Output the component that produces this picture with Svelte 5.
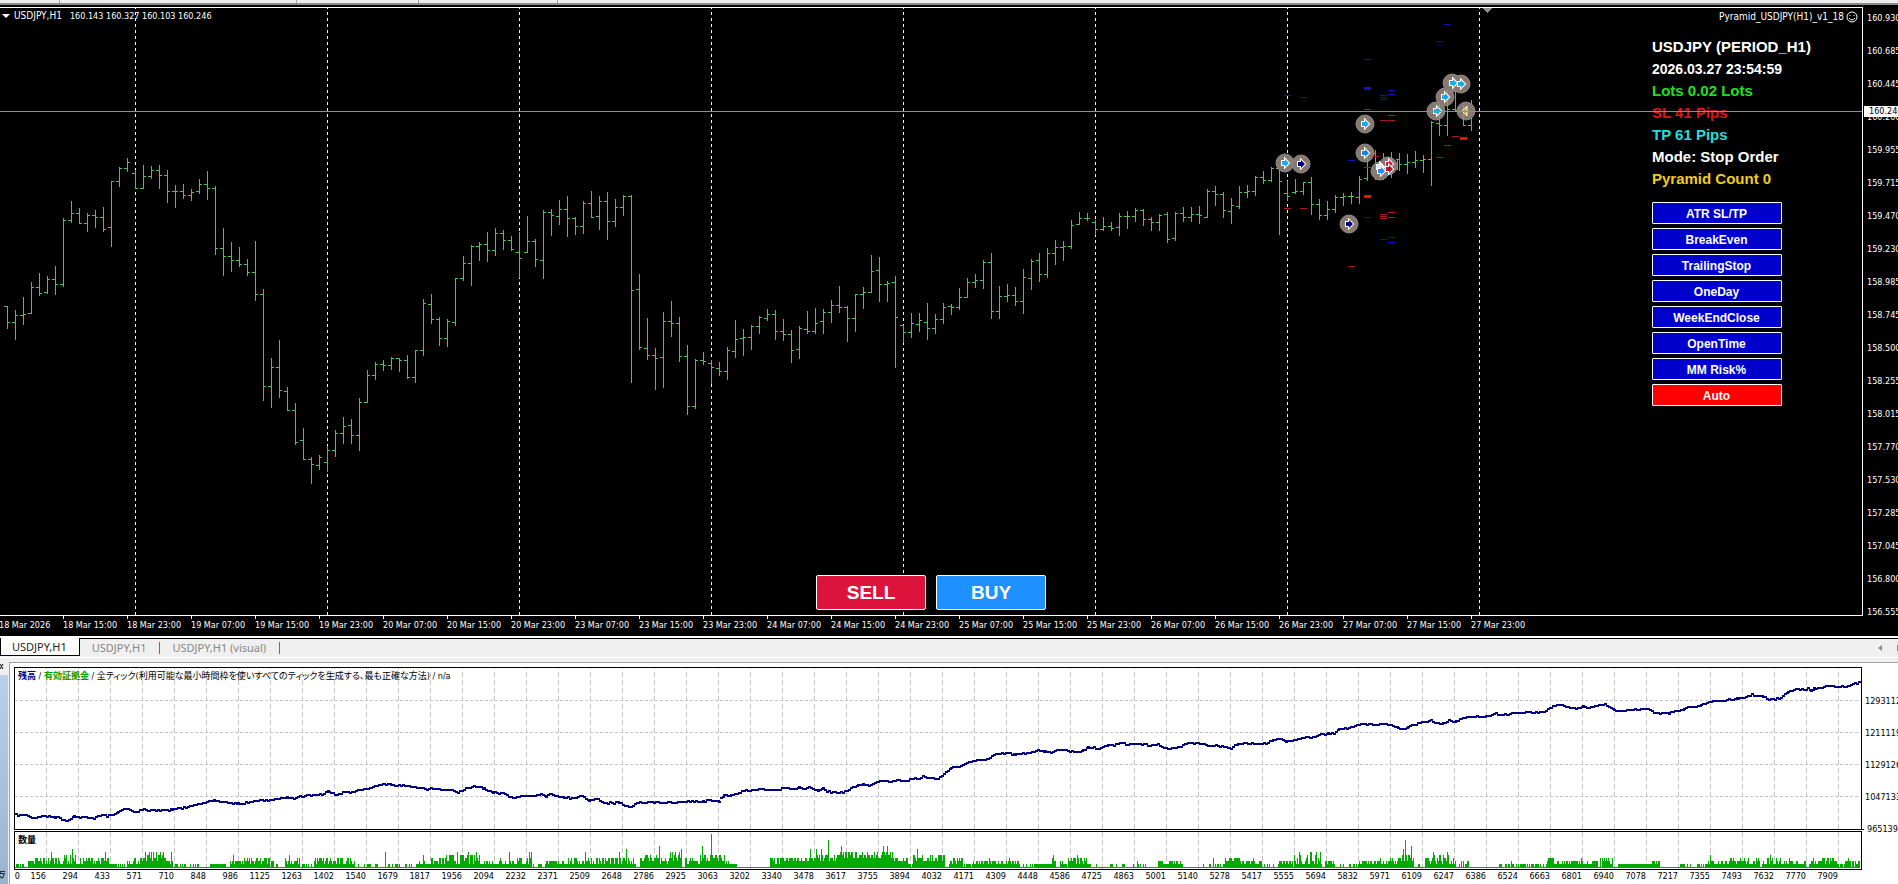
<script>
    // one bar every 8px: open, high, low, close
    const bars = `306 306 329 322,322 310 340 315,315 297 325 314,313 282 314 287,287 273 296 293,292 276 294 279,279 266 295 284,284 218 287 220,
220 201 223 213,213 208 224 223,223 213 232 215,215 210 228 217,217 207 232 229,227 181 247 181,181 167 187 168,168 158 172 162,
173 170 189 188,188 165 189 176,176 166 179 170,170 165 189 175,175 170 203 191,191 185 208 191,191 184 199 195,195 189 201 192,
191 179 194 184,184 171 200 188,188 186 255 248,248 228 276 256,256 242 272 260,260 247 267 264,264 259 276 272,272 241 301 294,
294 289 401 386,386 358 408 367,367 340 398 390,391 387 411 410,410 403 445 442,440 428 460 459,459 457 484 464,465 455 470 457,
462 446 472 450,450 430 457 433,433 417 444 426,425 419 444 435,435 398 451 402,402 370 403 375,375 362 380 364,364 360 371 365,
365 357 370 358,358 358 372 360,360 355 379 377,377 350 383 350,350 299 356 303,304 294 324 319,319 317 346 338,338 319 347 321,
322 278 326 278,278 256 281 263,263 245 286 246,246 242 261 244,244 232 262 250,250 228 256 233,233 230 250 240,240 236 251 249,
252 232 278 258,252 216 253 241,241 239 267 259,260 210 279 212,212 209 236 215,216 200 225 209,209 196 237 218,218 217 235 226,
226 201 234 203,203 191 218 217,216 196 230 201,201 192 240 221,221 199 227 207,207 195 216 196,196 195 383 290,289 274 350 347,
348 318 360 355,355 348 390 358,357 312 388 321,321 301 337 323,323 317 362 356,356 345 415 406,406 359 409 360,360 352 365 361,
363 360 384 367,368 362 376 371,371 347 380 350,351 320 358 339,338 329 356 337,337 325 350 326,326 316 334 317,318 309 321 314,
314 310 340 331,331 319 341 334,334 330 363 350,349 326 359 328,329 311 334 331,331 308 334 323,321 309 334 312,312 300 323 305,
305 286 313 307,307 306 342 318,318 294 332 294,294 287 309 292,292 255 293 271,270 257 302 284,284 281 302 283,282 276 368 317,
325 325 343 332,332 313 338 323,324 313 332 320,322 303 340 328,328 314 334 319,319 303 324 307,306 304 315 307,307 288 310 297,
297 278 298 282,282 274 288 280,280 260 289 262,262 253 319 311,311 286 319 296,296 284 302 295,295 287 306 301,301 269 314 277,
278 259 290 261,260 253 282 274,274 248 278 253,253 240 265 247,247 241 261 246,246 220 249 225,224 212 225 218,218 213 221 218,
222 220 235 229,229 217 231 226,226 222 231 228,227 213 236 216,216 211 229 216,216 208 222 210,210 209 226 219,219 217 231 222,
222 214 231 215,214 212 243 239,238 212 241 213,213 207 222 217,217 207 222 214,214 206 224 215,217 189 218 191,191 186 206 194,
194 192 218 210,211 198 224 205,206 186 209 192,192 185 198 191,191 176 196 177,177 171 184 180,180 167 182 168,168 165 235 181,
193 181 201 196,192 179 194 191,191 182 195 182,182 177 215 204,204 199 220 215,215 201 220 209,209 195 213 197,197 193 206 196,
196 192 204 196,197 176 204 179,178 148 181 153,153 150 180 170,170 153 180 162,162 152 178 165,159 153 171 164,164 154 174 162,
162 151 168 160,160 155 173 159,159 121 186 122,123 104 136 125,125 88 136 109,109 91 111 110,110 105 126 125,125 100 131 110`
        .split(',')
        .map(b => b.trim().split(' ').map(Number));

    const barPath = bars.map(([o, h, l, c], i) => {
        const x = 7 + i * 8;
        return `M${x} ${h}h1V${l}h-1zM${x - 3} ${o}h3v1h-3zM${x + 1} ${c}h2v1h-2z`;
    }).join('');

    const daySeparators = [135, 327, 519, 711, 903, 1095, 1287, 1479];

    const prices = ['160.930', '160.685', '160.445', '160.200', '159.955', '159.715', '159.470', '159.230', '158.985', '158.745', '158.500', '158.255', '158.015', '157.770', '157.530', '157.285', '157.045', '156.800', '156.555'];

    const times = ['18 Mar 2026', '18 Mar 15:00', '18 Mar 23:00'];
    for (const day of [19, 20, 23, 24, 25, 26, 27]) {
        for (const hour of ['07:00', '15:00', '23:00']) times.push(`${day} Mar ${hour}`);
    }

    // x of the bar, y, thickness
    const takeProfits = [[1287, 95, 1], [1303, 97, 1], [1367, 59, 1], [1367, 87, 3], [1383, 95, 1], [1383, 97, 1], [1383, 99, 1], [1391, 90, 1], [1391, 94, 1], [1351, 160, 1], [1367, 217, 1], [1383, 239, 1], [1391, 237, 1], [1391, 242, 1], [1447, 24, 1], [1439, 41, 1]];
    const stopLosses = [[1287, 208, 1], [1303, 208, 1], [1367, 109, 1], [1383, 120, 1], [1391, 115, 1], [1391, 120, 1], [1375, 156, 1], [1367, 167, 1], [1367, 195, 3], [1383, 214, 1], [1383, 216, 1], [1383, 218, 1], [1391, 212, 1], [1391, 217, 1], [1351, 266, 1], [1439, 157, 1], [1447, 145, 1], [1455, 136, 1], [1463, 137, 3]];

    const rings = [[1285, 163], [1301, 164], [1365, 124], [1365, 153], [1349, 224], [1380, 171], [1388, 166], [1436, 111], [1445, 97], [1452, 83], [1461, 84], [1466, 111]];
    const arrows = [
        [1285, 163, '#1eaae6'], [1301, 164, '#00007c'], [1365, 124, '#1eaae6'], [1365, 153, '#1e82e6'], [1349, 224, '#00007c'],
        [1380, 167, '#dfe8ee'], [1381, 171, '#1e90ff'], [1389, 164, '#dc143c'], [1389, 169, '#b4142d'],
        [1437, 111, '#1eaae6'], [1445, 97, '#1eaae6'], [1453, 83, '#1eaae6'], [1461, 84, '#1eaae6']
    ];

    const info = [
        ['2026.03.27 23:54:59', 'white'],
        ['Lots 0.02 Lots', 'lime'],
        ['SL 41 Pips', 'red'],
        ['TP 61 Pips', 'aqua'],
        ['Mode: Stop Order', 'white'],
        ['Pyramid Count 0', 'gold']
    ];
    const switches = ['ATR SL/TP', 'BreakEven', 'TrailingStop', 'OneDay', 'WeekEndClose', 'OpenTime', 'MM Risk%'];

    const tabs = ['USDJPY,H1', 'USDJPY,H1', 'USDJPY,H1 (visual)'];
    let activeTab = 0;
    let auto = true;

    const balance = `15,815 25,815 31,818 42,816 55,817 66,821 73,816 79,818 85,817 93,818 102,815 106,816 112,815 117,812 125,809 135,812 143,809 148,811 151,809 155,811 162,810 171,810 175,809 187,807 200,803 213,801 230,803 237,804 245,803 255,801 272,800 287,797 293,798 302,796 313,795 323,794 328,791 334,794 338,794 345,792 353,792 363,789 370,788 383,784 390,785 398,785 408,786 418,789 430,789 447,790 457,792 465,789 471,787 480,787
483,789 492,793 502,793 512,798 522,796 528,796 540,794 545,796 550,794 563,798 575,798 581,795 588,801 597,799 603,803 618,803 628,807 637,803 653,802 673,803 687,801 702,802 707,800 718,801 723,795 730,796 739,792 752,790 777,790 783,787 793,790 798,787 802,789 808,788 817,791 822,789 828,792 840,793 848,790 857,785 862,784 868,786 877,781 884,780 888,782 898,780 905,781 910,779 918,779 922,776 928,778 937,779 943,774 950,768 960,766
968,762 987,759 993,755 1007,753 1014,755 1027,753 1033,751 1044,751 1052,753 1059,749 1067,751 1075,752 1082,751 1087,747 1098,749 1107,745 1111,746 1115,744 1123,742 1125,745 1143,744 1147,746 1157,745 1167,749 1178,747 1185,744 1197,743 1207,746 1223,746 1228,749 1237,744 1257,744 1265,743 1272,740 1280,739 1285,741 1295,740 1303,737 1310,738 1318,735 1327,734 1333,733 1338,729 1350,728 1362,724 1373,725 1385,724 1390,725 1397,728 1404,729
1407,726 1415,724 1422,722 1430,721 1435,723 1442,724 1448,720 1455,722 1460,719 1468,717 1485,717 1495,714 1498,716 1507,714 1517,713 1543,712 1550,707 1559,705 1565,707 1577,709 1582,706 1588,708 1604,704 1613,710 1620,711 1647,709 1653,713 1668,713 1680,711 1683,709 1700,705 1713,701 1720,701 1737,699 1751,695 1762,697 1768,700 1780,698 1787,692 1795,689 1807,689 1810,691 1813,689 1828,686 1837,687 1848,686 1854,683 1860,683`
        .split(/\s+/)
        .map(p => p.split(',').map(Number));

    let seed = 7;
    function random() {
        seed = (seed * 16807) % 2147483647;
        return seed / 2147483647;
    }

    // the balance moves in one pixel steps between the known points
    let balancePath = '';
    for (let i = 1; i < balance.length; i++) {
        const [x0, y0] = balance[i - 1];
        const [x1, y1] = balance[i];
        for (let x = x0; x < x1; x += 2) {
            const y = Math.round(y0 - 1 + (y1 - y0) * (x - x0) / (x1 - x0) + (random() - 0.5) * 1.4);
            balancePath += `M${x} ${y}h3v2h-3z`;
        }
    }

    // from, to, lowest and highest number of lots
    const lots = [[15, 28, 0, 1], [28, 35, 1, 2], [35, 60, 1, 3], [60, 76, 1, 4], [76, 80, 1, 1], [80, 110, 1, 3], [110, 127, 0, 1], [127, 145, 1, 3], [145, 165, 2, 5], [165, 173, 1, 3], [173, 192, 0, 1], [193, 200, 0, 1], [210, 226, 1, 1], [230, 240, 1, 2], [240, 270, 1, 3], [270, 280, 0, 2], [285, 300, 1, 3], [300, 312, 0, 1], [314, 355, 1, 3], [358, 380, 0, 1], [385, 400, 0, 1], [405, 418, 0, 1], [418, 430, 1, 2], [430, 445, 1, 3], [445, 480, 1, 4],
        [480, 500, 1, 2], [500, 532, 1, 3], [532, 545, 0, 1], [545, 560, 1, 2], [560, 625, 1, 3], [625, 636, 1, 3], [640, 660, 2, 4], [660, 670, 1, 3], [670, 682, 2, 5], [685, 700, 1, 3], [700, 725, 2, 4], [725, 732, 1, 2], [732, 738, 0, 1], [770, 780, 1, 3], [780, 812, 2, 3], [812, 825, 2, 4], [825, 840, 2, 4], [840, 893, 3, 5], [893, 908, 2, 3], [908, 913, 0, 1], [913, 945, 2, 4], [945, 950, 0, 1], [950, 963, 1, 3], [963, 973, 0, 1], [973, 1020, 1, 2], [1022, 1035, 0, 1], [1035, 1050, 1, 1], [1050, 1056, 1, 3], [1060, 1067, 1, 2], [1068, 1087, 1, 3], [1087, 1098, 0, 1], [1110, 1113, 1, 2], [1115, 1148, 0, 1], [1158, 1183, 1, 2], [1202, 1225, 0, 1], [1225, 1240, 2, 3], [1240, 1262, 1, 2], [1263, 1275, 0, 1], [1278, 1293, 1, 2], [1294, 1303, 1, 4], [1303, 1322, 1, 5], [1325, 1335, 1, 2], [1340, 1357, 0, 1], [1358, 1378, 1, 2], [1378, 1400, 1, 3],
        [1400, 1414, 2, 4], [1416, 1420, 0, 1], [1425, 1430, 2, 4], [1430, 1450, 1, 4], [1450, 1456, 1, 3], [1458, 1470, 0, 2], [1498, 1530, 0, 1], [1530, 1547, 0, 1], [1547, 1555, 1, 3], [1555, 1598, 1, 2], [1600, 1613, 0, 3], [1618, 1650, 1, 1], [1650, 1660, 1, 2], [1678, 1684, 0, 2], [1684, 1706, 0, 1], [1706, 1725, 1, 2], [1725, 1760, 1, 3], [1762, 1790, 1, 3], [1790, 1806, 1, 2], [1809, 1838, 1, 3], [1838, 1844, 0, 1], [1844, 1850, 1, 3], [1850, 1860, 0, 2]];
    const peaks = [[51, 5], [66, 4], [72, 6], [105, 5], [153, 5], [156, 5], [171, 5], [233, 4], [289, 4], [385, 5], [423, 4], [457, 5], [468, 5], [476, 5], [509, 5], [529, 5], [531, 5], [585, 5], [619, 5], [626, 6], [659, 7], [681, 6], [702, 7], [711, 11], [810, 6], [816, 6], [821, 6], [828, 9], [841, 7], [883, 7], [887, 7], [917, 6], [941, 4], [989, 3], [1009, 3], [1053, 4], [1077, 4], [1137, 2], [1213, 3], [1253, 3], [1299, 5], [1316, 5], [1320, 5], [1403, 6], [1405, 9], [1411, 7], [1433, 5], [1447, 5], [1511, 2], [1581, 3], [1602, 3], [1710, 4], [1770, 4], [1848, 3]];

    let volumePath = 'M14 867H1860v1H14z';
    for (const [from, to, low, high] of lots) {
        for (let x = from; x < to; x++) {
            const n = Math.min(high, low + Math.floor(random() * (high - low + 1)));
            volumePath += `M${x} ${867 - n * 3}h1V868h-1z`;
        }
    }
    for (const [x, n] of peaks) volumePath += `M${x} ${867 - n * 3}h1V868h-1z`;

    const gridX = Array.from({ length: 57 }, (_, i) => 46 + i * 32);
    const gridY = [700, 732, 764, 796];
    const balances = ['1293112', '1211119', '1129126', '1047133', '965139'];
    const trades = [0, 156, 294, 433, 571, 710, 848, 986, 1125, 1263, 1402, 1540, 1679, 1817, 1956, 2094, 2232, 2371, 2509, 2648, 2786, 2925, 3063, 3202, 3340, 3478, 3617, 3755, 3894, 4032, 4171, 4309, 4448, 4586, 4725, 4863, 5001, 5140, 5278, 5417, 5555, 5694, 5832, 5971, 6109, 6247, 6386, 6524, 6663, 6801, 6940, 7078, 7217, 7355, 7493, 7632, 7770, 7909];
</script>

<main>
    <div class="toolbar-edge"><i></i><i></i><i></i><i></i></div>

    <section class="chart">
        <div class="chart-row">
            <div class="plot">
                <svg class="canvas" width="100%" height="607" shape-rendering="crispEdges">
                    <g transform="translate(0 -8)">
                        {#each daySeparators as x}
                            <path d="M{x} 8h1V615h-1z" fill="url(#dots)"/>
                        {/each}
                        <path d={barPath} fill="#4fc24f"/>
                        <path d="M1483 8h9l-4 5h-1z" fill="#8c8c8c"/>
                        {#each rings as [x, y]}
                            <circle cx={x} cy={y} r="9" fill="#87796f" stroke="#8c8a8c" stroke-width="1" shape-rendering="auto"/>
                        {/each}
                        <path d="M1367 150h1v12h-1zM1375 151h1v8h-1zM1391 153h1v8h-1zM1397 160h1v10h-1zM1439 104h1v15h-1zM1447 90h1v15h-1zM1463 105h1v15h-1z" fill="#4fc24f"/>
                        {#each takeProfits as [x, y, h]}
                            <rect x={x - 3} {y} width="7" height={h} fill="#1410b4"/>
                        {/each}
                        {#each stopLosses as [x, y, h]}
                            <rect x={x - 3} {y} width="7" height={h} fill={h > 1 ? '#dc1414' : '#a81a1e'}/>
                        {/each}
                        {#each arrows as [x, y, color]}
                            <path transform="translate({x} {y})" d="M-3 -2H0V-4L4 0L0 4V2H-3Z" fill={color} stroke="white" stroke-width="2" paint-order="stroke" shape-rendering="auto"/>
                        {/each}
                        <path d="M1462 111L1467 106V116Z" fill="#daa520" stroke="white" stroke-width="1" shape-rendering="auto"/>
                    </g>
                    <defs>
                        <pattern id="dots" width="6" height="6" patternUnits="userSpaceOnUse">
                            <rect width="6" height="3" fill="white"/>
                        </pattern>
                    </defs>
                </svg>

                <p class="symbol">
                    <svg width="8" height="4"><path d="M0 0H8L4 4Z" fill="white"/></svg>
                    <span class="name">USDJPY,H1</span>
                    <span>160.143 160.327 160.103 160.246</span>
                </p>
                <p class="expert">
                    Pyramid_USDJPY(H1)_v1_18
                    <svg width="12" height="12" fill="none" stroke="white">
                        <circle cx="6" cy="6" r="5"/>
                        <path d="M3 7Q6 11 9 7M4 4V5M8 4V5"/>
                    </svg>
                </p>

                <div class="panel">
                    <h1>USDJPY (PERIOD_H1)</h1>
                    {#each info as [text, color], i}
                        <p class={color} class:clock={i === 0}>{text}</p>
                    {/each}
                    <div class="switches">
                        {#each switches as name}
                            <button>{name}</button>
                        {/each}
                        <button class:auto on:click={() => auto = !auto}>Auto</button>
                    </div>
                </div>

                <div class="orders">
                    <button class="sell">SELL</button>
                    <button class="buy">BUY</button>
                </div>
                <div class="bid"></div>
            </div>

            <ul class="prices">
                {#each prices as price}
                    <li>{price}</li>
                {/each}
                <li class="current">160.246</li>
            </ul>
        </div>
        <ul class="times">
            {#each times as time}
                <li>{time}</li>
            {/each}
        </ul>
    </section>

    <nav>
        {#each tabs as tab, i}
            <button class:active={activeTab === i} on:click={() => activeTab = i}>{tab}</button>
        {/each}
        <svg class="scroll" width="20" height="8"><path d="M4 0V6L0 3ZM19 0V6H20V0Z" fill="#8c8c8c"/></svg>
    </nav>

    <section class="tester">
        <div class="side">
            <button aria-label="Close"><svg width="4" height="6"><path d="M0 0L3 5M3 0L0 5" stroke="black" stroke-width="1"/></svg></button>
            <div class="caption"><span>テスター</span></div>
        </div>
        <div class="report">
            <div class="report-row">
                <div class="graphs">
                    <div class="graph">
                        <svg class="canvas" width="100%" height="161" shape-rendering="crispEdges">
                            <g transform="translate(-15 -668)">
                                {#each gridX as x}
                                    <path d="M{x} 668h1V829h-1z" fill="url(#dashV)"/>
                                {/each}
                                {#each gridY as y}
                                    <path d="M15 {y}H1861v1H15z" fill="url(#dashH)"/>
                                {/each}
                                <path d={balancePath} fill="#000080"/>
                            </g>
                            <defs>
                                <pattern id="dashV" width="8" height="8" patternUnits="userSpaceOnUse"><rect width="8" height="5" fill="#c4c4c4"/></pattern>
                                <pattern id="dashH" width="5" height="8" patternUnits="userSpaceOnUse"><rect width="3" height="8" fill="#c4c4c4"/></pattern>
                            </defs>
                        </svg>
                        <p class="legend"><b class="balance">残高</b> / <b class="equity">有効証拠金</b> / 全ティック(利用可能な最小時間枠を使いすべてのティックを生成する、最も正確な方法) / n/a</p>
                    </div>
                    <div class="graph">
                        <svg class="canvas" width="100%" height="37" shape-rendering="crispEdges">
                            <g transform="translate(-15 -832)">
                                {#each gridX as x}
                                    <path d="M{x} 832h1V869h-1z" fill="url(#dashV)"/>
                                {/each}
                                <path d={volumePath} fill="#00aa00"/>
                            </g>
                        </svg>
                        <p class="legend"><b>数量</b></p>
                    </div>
                </div>
                <ul class="balances">
                    {#each balances as value}
                        <li>{value}</li>
                    {/each}
                </ul>
            </div>
            <ul class="trades">
                {#each trades as n}
                    <li>{n}</li>
                {/each}
            </ul>
        </div>
    </section>
</main>

<style>
    :global(body){
        margin: 0;
        background: #f0f0f0;
    }
    main{
        overflow: hidden;
        font-family: "DejaVu Sans Condensed", "Noto Sans", "Noto Sans CJK JP", sans-serif;
        font-size: 9px;
        line-height: 9px;
    }
    ul{
        list-style: none;
        margin: 0;
        padding: 0;
    }
    p, h1{
        margin: 0;
    }
    button{
        font-family: "Liberation Sans", Arial, sans-serif;
        padding: 0;
        cursor: pointer;
    }
    .canvas{
        display: block;
    }

    .toolbar-edge{
        display: flex;
        height: 3px;
        background: #ededed;
    }
    .toolbar-edge i{
        width: 59px;
        border-right: 1px solid #a0a0a0;
    }
    .toolbar-edge i:nth-child(2){
        width: 236px;
    }
    .toolbar-edge i:nth-child(3){
        width: 121px;
    }
    .toolbar-edge i:nth-child(4){
        width: 138px;
    }

    .chart{
        background: black;
        color: white;
        border-top: 2px solid #8a8a8a;
        padding-top: 2px;
        border-bottom: 2px solid white;
    }
    .chart-row{
        display: flex;
    }
    .plot{
        position: relative;
        flex: 1;
        min-width: 0;
        border: 1px solid white;
        border-left: 0;
    }
    .symbol, .expert{
        position: absolute;
        top: 2px;
        display: flex;
        align-items: center;
        line-height: 12px;
    }
    .symbol{
        left: 2px;
        gap: 4px;
    }
    .symbol span + span{
        margin-left: 4px;
    }
    .name, .expert{
        font-size: 10px;
    }
    .expert{
        right: 4px;
        top: 3px;
        gap: 2px;
    }
    .panel{
        position: absolute;
        top: 28px;
        right: 60px;
        width: 150px;
        font: bold 15px/22px "Liberation Sans", Arial, sans-serif;
        white-space: nowrap;
    }
    .panel h1{
        font-size: 15px;
        line-height: 22px;
    }
    .clock{
        font-size: 14px;
    }
    .lime{
        color: #1fe01f;
    }
    .red{
        color: #e01414;
    }
    .aqua{
        color: #22dede;
    }
    .gold{
        color: #f2cb1d;
    }
    .switches{
        display: flex;
        flex-direction: column;
        gap: 4px;
        width: 130px;
        margin-top: 12px;
    }
    .switches button{
        height: 22px;
        border: 1px solid white;
        border-radius: 1px;
        padding: 1px 1px 0 0;
        background: #0000cd;
        color: white;
        font-size: 12px;
        font-weight: bold;
    }
    .switches .auto{
        background: red;
    }
    .orders{
        position: absolute;
        left: 0;
        right: 0;
        bottom: 5px;
        display: flex;
        justify-content: center;
        gap: 10px;
    }
    .orders button{
        width: 110px;
        height: 35px;
        border: 1px solid white;
        border-radius: 2px;
        color: white;
        font-size: 19px;
        font-weight: bold;
    }
    .sell{
        background: #dc143c;
    }
    .buy{
        background: #1e90ff;
    }
    .bid{
        position: absolute;
        top: 103px;
        left: 0;
        right: 0;
        height: 1px;
        background: #8f8f8f;
    }

    .prices{
        position: relative;
        width: 35px;
        padding-top: 7px;
        overflow: hidden;
    }
    .prices li, .balances li{
        display: flex;
        align-items: center;
        gap: 4px;
    }
    .prices li + li{
        margin-top: 24px;
    }
    .prices li:nth-child(19){
        height: 8px;
    }
    .prices li::before{
        content: "";
        width: 2px;
        height: 1px;
        background: white;
    }
    .prices .current{
        position: absolute;
        top: 99px;
        left: 1px;
        margin: 0;
        padding-left: 5px;
        line-height: 11px;
        background: white;
        color: black;
    }
    .prices .current::before{
        content: none;
    }
    .times{
        display: flex;
        height: 20px;
        overflow: hidden;
    }
    .times li{
        position: relative;
        flex: 0 0 64px;
        line-height: 18px;
        white-space: nowrap;
    }
    .times li:first-child{
        margin-left: -1px;
    }
    .times li + li::before{
        content: "";
        position: absolute;
        top: 0;
        left: 0;
        width: 1px;
        height: 3px;
        background: white;
    }

    nav{
        display: flex;
        height: 18px;
        border-top: 1px solid black;
        border-bottom: 1px solid white;
        background: #f0f0f0;
    }
    nav button{
        height: 12px;
        margin-top: 3px;
        padding: 0 13px 0 12px;
        border: 0;
        border-right: 1px solid #6e6e6e;
        background: none;
        color: #868686;
        font: 11px/12px "Noto Sans", sans-serif;
    }
    nav .active{
        height: 18px;
        margin-top: -1px;
        padding: 0 12px 0 11px;
        border: 1px solid black;
        border-top: 0;
        background: white;
        color: #222;
    }
    .scroll{
        margin: 6px 0 0 auto;
    }

    .tester{
        display: flex;
        margin-top: 4px;
    }
    .side{
        width: 9px;
        margin-top: -2px;
        display: flex;
        flex-direction: column;
        overflow: hidden;
    }
    .side button{
        display: flex;
        height: 15px;
        border: 0;
        padding-top: 4px;
        background: none;
    }
    .caption{
        flex: 1;
        display: flex;
        flex-direction: column;
        justify-content: flex-end;
        width: 8px;
        background: linear-gradient(#b9d1ea, #98b4d2);
    }
    .caption span{
        height: 14px;
        width: 5px;
        overflow: hidden;
        writing-mode: vertical-rl;
        line-height: 5px;
    }
    .report{
        flex: 1;
        min-width: 0;
        border: 1px solid #a0a0a0;
        border-width: 1px 0 0 1px;
        padding: 4px 0 0 4px;
        background: white;
    }
    .report-row{
        display: flex;
    }
    .graphs{
        flex: 1;
        min-width: 0;
        display: flex;
        flex-direction: column;
        gap: 1px;
    }
    .graph{
        position: relative;
        border: 1px solid black;
    }
    .legend{
        position: absolute;
        top: 3px;
        left: 3px;
        line-height: 11px;
        font-feature-settings: "palt";
        white-space: nowrap;
    }
    .balance{
        color: #000080;
    }
    .equity{
        color: #00a000;
    }
    .balances{
        width: 36px;
        padding-top: 30px;
        overflow: hidden;
    }
    .balances li + li{
        margin-top: 23px;
    }
    .balances li{
        gap: 3px;
    }
    .balances li::before{
        content: "";
        width: 2px;
        height: 1px;
        background: black;
    }
    .trades{
        display: flex;
        height: 14px;
        overflow: hidden;
    }
    .trades li{
        flex: 0 0 32px;
        height: 11px;
        text-align: right;
        line-height: 13px;
    }
    .trades li:first-child{
        flex-basis: 6px;
    }
    .trades li:nth-child(2){
        flex-basis: 26px;
    }
</style>
